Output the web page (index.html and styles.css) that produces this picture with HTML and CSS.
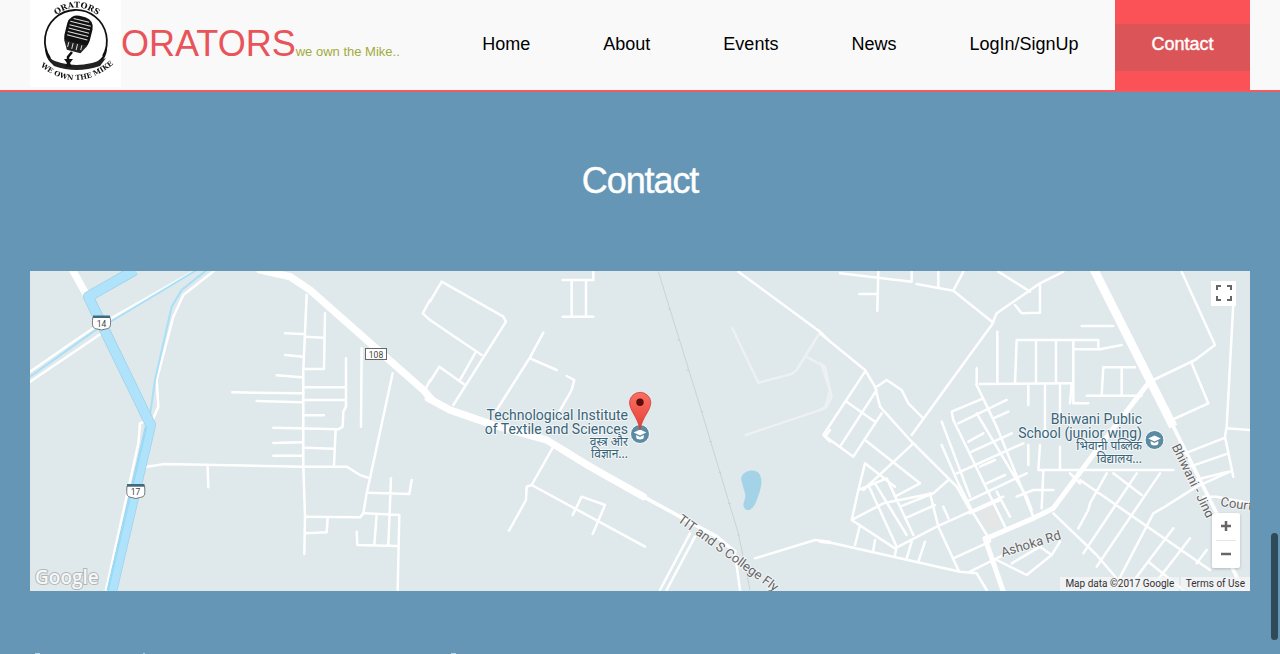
FILE: index.html
```html
<!DOCTYPE html>
<html lang="en">
<head>
<meta charset="utf-8">
<title>Orators</title>
<link rel="stylesheet" href="styles.css">
</head>
<body>
<header class="topbar">
  <div class="brand">
    <div class="logo">
      <svg class="logo-svg" viewBox="0 0 91 87" width="91" height="87">
        <defs>
          <path id="arc-top" d="M22 19Q46 -4 72 19"/>
          <path id="arc-bot" d="M8 64Q46 97 86 62"/>
        </defs>
        <path d="M20 58A31 31 0 1 1 73 56" fill="none" stroke="#111" stroke-width="1.800"/>
        <path d="M15 44C16 56 24 64 34 66L25 66C18 62 14 54 15 44Z" fill="#111"/>
        <path d="M77 44C76 56 68 64 56 66L68 65C74 60 78 54 77 44Z" fill="#111"/>
        <path d="M18 58Q46 72 76 58L70 66Q46 74 24 66Z" fill="#222"/>
        <g transform="rotate(14 48 34)">
          <rect x="35" y="16" width="26" height="32" rx="10" fill="#111"/>
          <path class="mic-lines" d="M40 20H56M37.500 23.500H58.500M37.500 27H58.500M37.500 30.500H58.500M37.500 34H58.500M37.500 37.500H58.500"/>
          <path d="M36 43H60L55 52H41Z" fill="#222"/>
          <path class="mic-lines" d="M41 44V49M45.500 44V50M50 44V50M54.500 44V49"/>
        </g>
        <path class="mic-stem" d="M42 52L38 57V63"/>
        <path d="M34 59H43L40 63 42 67H35L37 63Z" fill="#111"/>
        <text class="logo-text"><textPath href="#arc-top" startOffset="50%" text-anchor="middle">ORATORS</textPath></text>
        <text class="logo-text small"><textPath href="#arc-bot" startOffset="50%" text-anchor="middle">WE OWN THE MIKE</textPath></text>
      </svg>
    </div>
    <span class="brand-name">ORATORS</span><span class="tagline">we own the Mike..</span>
  </div>
  <nav class="nav">
    <a class="nav-item">Home</a>
    <a class="nav-item">About</a>
    <a class="nav-item">Events</a>
    <a class="nav-item">News</a>
    <a class="nav-item">LogIn/SignUp</a>
    <a class="nav-item active"><span class="active-band">Contact</span></a>
  </nav>
</header>
<main class="contact">
  <h1 class="title">Contact</h1>
  <section class="map">
    <svg class="map-svg" viewBox="30 271 1220 320" width="1220" height="320">
      <defs>
        <linearGradient id="pin" x1="0" y1="0" x2="0" y2="1">
          <stop offset="0" stop-color="#fb6f62"/>
          <stop offset="1" stop-color="#e63f36"/>
        </linearGradient>
      </defs>
      <rect x="30" y="271" width="1220" height="320" fill="#dfe8ea"/>

      <!-- west part -->
      <g transform="translate(30 270) scale(.33333)">
        <g class="roads">
          <path d="M0 305L130 215 190 175 490 5"/>
          <path d="M0 335L215 190"/>
          <path d="M555 0L460 75 430 140 380 330 385 410 370 445 330 460 325 520 228 960"/>
          <path d="M350 590L405 582 815 590H950L990 615 1020 625"/>
          <path d="M533 590L535 652"/>
          <path d="M830 75L820 300V590L825 740 823 852"/>
          <path d="M885 130L882 297H825"/>
          <path d="M825 200L880 203M765 190L820 192M765 255L820 260M740 316L815 322M607 367L820 370M825 352H945"/>
          <path d="M948 265V410L940 425 938 470 925 478 730 473"/>
          <path d="M680 393L815 397M825 390H945M825 436H882M917 480L912 585M825 533L912 536M730 519L815 517M730 557H815"/>
          <path d="M995 235L993 470"/>
          <path d="M1088 310L1020 625 1010 670 1000 730 990 742 825 740"/>
          <path d="M1015 668L1138 672 1145 630M1083 625L1075 825M1005 730L1108 735 1103 960M1040 735L1033 825M980 785L982 825 1100 828M893 745L890 787 825 790"/>
          <path d="M1200 330L1185 360M1200 90L1178 130 1200 150"/>
        </g>
        <g class="roads thick">
          <path d="M125 -5L175 85"/>
          <path d="M690 0L780 20 840 60 1180 360 1205 388"/>
        </g>
        <g class="canal-thin">
          <path d="M0 320L190 185 250 150 500 0"/>
          <path d="M530 0L455 60 425 110 375 330 355 470"/>
        </g>
        <path class="canal-edge" d="M315 0L175 80 362 465 245 965"/>
        <path class="canal" d="M315 0L175 80 362 465 245 965"/>
        <path class="canal-inner" d="M350 470L235 960"/>
      </g>

      <!-- centre part -->
      <g transform="translate(430 270) scale(.33333)">
        <g class="roads">
          <path d="M0 150L155 255M0 95L35 35 220 140 228 155 70 405M135 250L90 330M0 335L28 290 105 345"/>
          <path d="M340 188L300 262 200 420M300 265L380 300M410 318L433 330 425 360 385 430"/>
          <path d="M370 530L305 645 290 650 288 690 237 782M305 645L645 830M428 735L455 680 525 705 488 792"/>
          <path d="M398 30H490V5M425 30V138M468 30V138M398 140H490"/>
          <path d="M925 5L1170 185 1200 215"/>
          <path d="M975 865L1155 810 1200 815M690 960L780 790M710 960L795 800"/>
          <path d="M915 850L930 960"/>
          <path d="M1185 500L1200 480M1185 500L1200 515"/>
        </g>
        <g class="roads thick">
          <path d="M-5 385L60 420 190 465 350 510 480 590 640 680"/>
        </g>
        <path class="roads mid" d="M640 680L860 800 915 845"/>
        <g class="parks">
          <path d="M907 175L985 338 1085 312 1100 300 1165 195M1125 258L1175 285 1200 360 1185 415 947 495"/>
        </g>
        <path class="rail" d="M685 5L815 425 925 790 960 960"/>
        <path class="rail" d="M714 117h8M742 210h8M770 300h8M812 425h8M838 515h8M866 607h8M894 700h8M922 795h8"/>
        <path d="M933 628C935 608 958 596 978 604 1000 615 998 645 982 685 972 722 950 728 942 712 935 698 950 690 945 670Z" fill="#a4d2e7"/>
      </g>

      <!-- east part -->
      <g transform="translate(820 270) scale(.33333)">
        <path class="parks" d="M0 280L15 290 35 380 20 410 0 420"/>
        <path d="M480 720L535 715 545 770 490 775Z" fill="#e4e6e8"/>
        <g class="roads">
          <path d="M60 10L275 35V5M175 5L172 122M118 72H172M290 42L400 62 430 5M355 5V50M400 62L520 158"/>
          <path d="M730 5L660 40 530 130 515 165 380 350 275 495M535 5L630 65M660 45V128L605 130 585 105"/>
          <path d="M785 168H880M905 225L840 238H760M532 185V340M470 295V345M480 342L755 340M590 210H835V235M590 210L585 340M648 210V340M708 210V340M760 215V400H805M850 292L845 375M850 292H945M905 292V375M800 377H965"/>
          <path d="M625 345V405M675 345V500M720 345V430M755 345L750 400"/>
          <path d="M470 345L530 470 640 740M490 385L395 425 400 450 555 770M415 460L560 390M520 445L565 425M470 430L620 680 635 720M445 515L490 490M455 545L575 490M410 610L610 520M365 455L450 680M365 525L415 640 460 730 510 810"/>
          <path d="M480 590L525 570M500 640L555 615M440 695L620 610M450 730L540 690M530 665L570 740M590 680L640 660H700M625 525V585M660 525L655 600H1060M720 530V600M670 605L665 715M750 610L780 640"/>
          <path d="M0 190L135 300 165 350 180 410 270 510 410 650 450 720M135 305L10 495 100 560 185 430M170 360L60 530M200 330L170 350M200 330L245 360 265 400 310 445M80 395L165 455M135 510L300 640 225 680M280 520L130 660"/>
          <path d="M135 580L225 650M135 580L115 660 95 750 225 835 350 770 550 680M115 660L200 625 280 795M145 645L230 830M165 640L260 795M95 750L190 700 340 670 385 630M240 710L340 670M255 745L345 705M330 670L355 770 415 900M370 710L385 745M120 765L105 825M165 810L160 840M230 830L225 855M275 815L260 865M315 815L295 875"/>
          <path d="M0 815L40 820 420 905 470 910 500 960M450 905L580 840M400 865L510 815M530 870L620 915 695 855 660 830 575 880M720 815L695 855M700 730L830 855 920 960"/>
          <path d="M780 630L1170 900M860 610L810 700 805 720 775 775M950 610L790 850M1020 610L830 890M880 610L965 675M1060 775L920 960M1110 805L990 960M1160 840L1130 880M985 875L1090 960M1180 890H1240M1000 730L1035 710 1130 650 1230 605M1000 730L880 960"/>
          <path d="M1000 330L1125 270 1185 225 1085 5M1115 280L1165 400 1055 450M1240 100L1220 470 1215 500 1240 620M1220 475L1290 480M1095 550L1210 505M1110 590L1225 550M1125 630L1225 605M1150 680H1190L1290 700"/>
        </g>
        <path class="roads mid" d="M1060 470L1240 830"/>
        <path class="roads mid" d="M1235 890L1270 960"/>
        <path class="roads arterial" d="M985 340L830 540 700 715 640 745 500 805"/>
        <path class="roads arterial" d="M495 805L550 965"/>
        <path class="roads wide" d="M820 -5L1060 470"/>
      </g>

      <!-- shields -->
      <g class="shield">
        <path d="M92.800 317.500H110.200L110.500 320.500C110.500 323.500 110.700 325.500 109.800 327 108.800 328.500 106.800 328.800 104.800 329.200L101.500 330 98.200 329.200C96.200 328.800 94.200 328.500 93.200 327 92.300 325.500 92.500 323.500 92.500 320.500Z" fill="#fff" stroke="#555" stroke-width=".8"/>
        <rect x="93" y="315.500" width="17" height="2.500" fill="#406a80"/>
        <text x="101.500" y="326.500" text-anchor="middle">14</text>
      </g>
      <g class="shield">
        <path d="M127 486H144.500L144.800 489C144.800 492 145 494 144.100 495.500 143.100 497 141.100 497.300 139.100 497.700L135.800 498.500 132.500 497.700C130.500 497.300 128.500 497 127.500 495.500 126.600 494 126.800 492 126.800 489Z" fill="#fff" stroke="#555" stroke-width=".8"/>
        <rect x="127" y="484" width="17.500" height="2.500" fill="#406a80"/>
        <text x="135.500" y="495" text-anchor="middle">17</text>
      </g>
      <g class="shield">
        <rect x="365.500" y="348.500" width="21" height="11" fill="#fff" stroke="#666"/>
        <text x="376" y="358" text-anchor="middle">108</text>
      </g>

      <!-- labels -->
      <g class="poi">
        <text x="628" y="420" text-anchor="end">Technological Institute</text>
        <text x="628" y="434" text-anchor="end">of Textile and Sciences</text>
      </g>
      <g class="poi-hi">
        <text x="628" y="446" text-anchor="end">वस्त्र और</text>
        <text x="628" y="458" text-anchor="end">विज्ञान...</text>
      </g>
      <g class="poi">
        <text x="1142" y="424" text-anchor="end">Bhiwani Public</text>
        <text x="1142" y="438" text-anchor="end">School (junior wing)</text>
      </g>
      <g class="poi-hi">
        <text x="1142" y="450" text-anchor="end">भिवानी पब्लिक</text>
        <text x="1142" y="463" text-anchor="end">विद्यालय...</text>
      </g>
      <circle cx="640" cy="434" r="9.500" fill="#5b8ba3" stroke="#fff" stroke-width="1"/>
      <path d="M633.700 432.500L640 429.500 646.300 432.500 640 435.500ZM636.200 435V437.500C636.200 438.500 638 439.500 640 439.500S643.800 438.500 643.800 437.500V435L640 437Z" fill="#fff"/>
      <circle cx="1154.500" cy="440" r="9.500" fill="#5b8ba3" stroke="#fff" stroke-width="1"/>
      <path d="M1148.200 438.500L1154.500 435.500 1160.800 438.500 1154.500 441.500ZM1150.700 441V443.500C1150.700 444.500 1152.500 445.500 1154.500 445.500S1158.300 444.500 1158.300 443.500V441L1154.500 443Z" fill="#fff"/>

      <!-- marker -->
      <path d="M640 430C638 417 629.500 411 629.500 402A10.700 10.700 0 0 1 650.800 402C650.800 411 642 417 640 430Z" fill="url(#pin)" stroke="#cf3d33" stroke-width=".8"/>
      <circle cx="640" cy="402.300" r="3.700" fill="#5a0d0b"/>

      <!-- road names -->
      <text class="road" transform="translate(677 521) rotate(36)">TIT and S College Fly</text>
      <text class="road" transform="translate(1002.500 557) rotate(-17)">Ashoka Rd</text>
      <text class="road" transform="translate(1171.500 446.500) rotate(64)">Bhiwani - Jind</text>
      <text class="road" transform="translate(1220 506) rotate(8)">Court</text>

      <text class="google" x="35" y="584">Google</text>
    </svg>
    <button class="fullscreen" aria-label="Fullscreen">
      <svg viewBox="0 0 18 18" width="18" height="18"><path d="M2 6V2H6M12 2H16V6M16 12V16H12M6 16H2V12" fill="none" stroke="#666" stroke-width="2"/></svg>
    </button>
    <div class="zoomctl">
      <button class="zoombtn" aria-label="Zoom in"><svg viewBox="0 0 18 18" width="18" height="18"><path d="M9 4V14M4 9H14" stroke="#666" stroke-width="2.500"/></svg></button>
      <div class="zoomsep"></div>
      <button class="zoombtn" aria-label="Zoom out"><svg viewBox="0 0 18 18" width="18" height="18"><path d="M4 9H14" stroke="#666" stroke-width="2.500"/></svg></button>
    </div>
    <div class="attrib"><span class="attrib-box">Map data ©2017 Google</span><span class="attrib-box">Terms of Use</span></div>
  </section>
  <svg class="peek" viewBox="0 0 1220 2" width="1220" height="2">
    <rect x="5" y="1" width="5" height="1" fill="#bcd6e4"/>
    <rect x="113" y="1" width="2" height="1" fill="#a9c9da"/>
    <rect x="421" y="1" width="5" height="1" fill="#bcd6e4"/>
  </svg>
</main>
<div class="scrollthumb"></div>
</body>
</html>
```

FILE: styles.css
```css
html, body {
  margin: 0;
  height: 654px;
  overflow: hidden;
  background: #6596b5;
  font-family: "Liberation Sans", Arial, sans-serif;
}
.topbar {
  display: flex;
  justify-content: space-between;
  height: 90px;
  padding: 0 30px;
  background: #f9f9f9;
  border-bottom: 2px solid #f15a5e;
}
.brand {
  display: flex;
  align-items: flex-start;
}
.logo {
  width: 91px;
  height: 87px;
  background: #fff;
}
.logo-svg {
  display: block;
  filter: blur(.35px);
}
.logo-text {
  font: bold 8px "DejaVu Serif", serif;
  fill: #111;
}
.logo-text.small {
  font-size: 7px;
}
.mic-lines {
  fill: none;
  stroke: #ddd;
  stroke-width: 1;
}
.mic-stem {
  fill: none;
  stroke: #111;
  stroke-width: 2.500;
}
.brand-name {
  margin-top: 23px;
  font-size: 36px;
  line-height: 41px;
  color: #e8545a;
}
.tagline {
  margin-top: 44px;
  font-size: 13px;
  line-height: 16px;
  color: #a0ab3c;
}
.nav {
  display: flex;
}
.nav-item {
  display: flex;
  align-items: center;
  height: 88px;
  padding: 0 36.500px;
  font-size: 18px;
  color: #000;
}
.nav-item.active {
  align-items: flex-start;
  width: 135px;
  height: 90px;
  padding: 0;
  background: #fa5256;
  color: #fff;
}
.active-band {
  display: flex;
  align-items: center;
  justify-content: center;
  box-sizing: border-box;
  width: 100%;
  height: 47px;
  margin-top: 24px;
  padding-bottom: 7px;
  background: #db5558;
  -webkit-text-stroke: .4px #fff;
}
.contact {
  padding: 0 30px;
}
.title {
  margin: 0;
  padding-top: 67px;
  height: 112px;
  font-size: 36px;
  line-height: 44px;
  font-weight: 400;
  letter-spacing: -1.100px;
  color: #fff;
  text-align: center;
  -webkit-text-stroke: .4px #fff;
}
.map {
  position: relative;
  width: 1220px;
  height: 320px;
  overflow: hidden;
}
.map-svg {
  display: block;
}
.roads {
  fill: none;
  stroke: #fff;
  stroke-width: 7.500;
  stroke-linecap: round;
  stroke-linejoin: round;
}
.roads.mid {
  stroke-width: 11;
}
.roads.arterial {
  stroke-width: 15;
}
.roads.thick {
  stroke-width: 22;
}
.roads.wide {
  stroke-width: 26;
  stroke-linecap: butt;
}
.parks {
  fill: none;
  stroke: #edf1f1;
  stroke-width: 7.500;
  stroke-linecap: round;
  stroke-linejoin: round;
}
.rail {
  fill: none;
  stroke: #cdd2d2;
  stroke-width: 3;
}
.canal-thin {
  fill: none;
  stroke: #a9e0f8;
  stroke-width: 6;
}
.canal-edge {
  fill: none;
  stroke: #9ed0e6;
  stroke-width: 32;
  stroke-linejoin: round;
}
.canal {
  fill: none;
  stroke: #aee3fb;
  stroke-width: 28;
  stroke-linejoin: round;
}
.canal-inner {
  fill: none;
  stroke: #93d9f8;
  stroke-width: 4;
}
.poi text {
  font: 14px Roboto, sans-serif;
  fill: #386479;
  stroke: rgba(255,255,255,.6);
  stroke-width: 2px;
  paint-order: stroke;
}
.poi-hi text {
  font: 12px "Noto Sans", Roboto, sans-serif;
  fill: #386479;
  stroke: rgba(255,255,255,.6);
  stroke-width: 2px;
  paint-order: stroke;
}
.shield text {
  font: 8.500px Roboto, sans-serif;
  fill: #444;
}
.road {
  font: 13px Roboto, sans-serif;
  fill: #666;
  stroke: rgba(255,255,255,.6);
  stroke-width: 2px;
  paint-order: stroke;
}
.google {
  font: 600 19px "Open Sans", sans-serif;
  fill: #f6f8f8;
  stroke: rgba(90,90,90,.35);
  stroke-width: 2px;
  paint-order: stroke;
}
.fullscreen {
  position: absolute;
  top: 10px;
  right: 14px;
  width: 25px;
  height: 25px;
  padding: 3px;
  border: 0;
  background: #fff;
}
.zoomctl {
  position: absolute;
  top: 242px;
  right: 10px;
  width: 28px;
  height: 55px;
  background: #fff;
  border-radius: 2px;
  box-shadow: 0 1px 3px rgba(0,0,0,.2);
}
.zoombtn {
  display: block;
  width: 28px;
  height: 27px;
  padding: 4px 5px;
  border: 0;
  background: transparent;
}
.zoomsep {
  height: 1px;
  margin: 0 4px;
  background: #e6e6e6;
}
.attrib {
  position: absolute;
  right: 0;
  bottom: 0;
  display: flex;
  gap: 1.500px;
  font: 10px/14px Roboto, sans-serif;
  color: #333;
}
.attrib-box {
  height: 14px;
  padding: 0 5px;
  background: rgba(245,245,245,.75);
}
.peek {
  display: block;
  margin-top: 61px;
}
.scrollthumb {
  position: absolute;
  left: 1271px;
  top: 533px;
  width: 7px;
  height: 107px;
  border-radius: 4px;
  background: #2f4a58;
}
```
